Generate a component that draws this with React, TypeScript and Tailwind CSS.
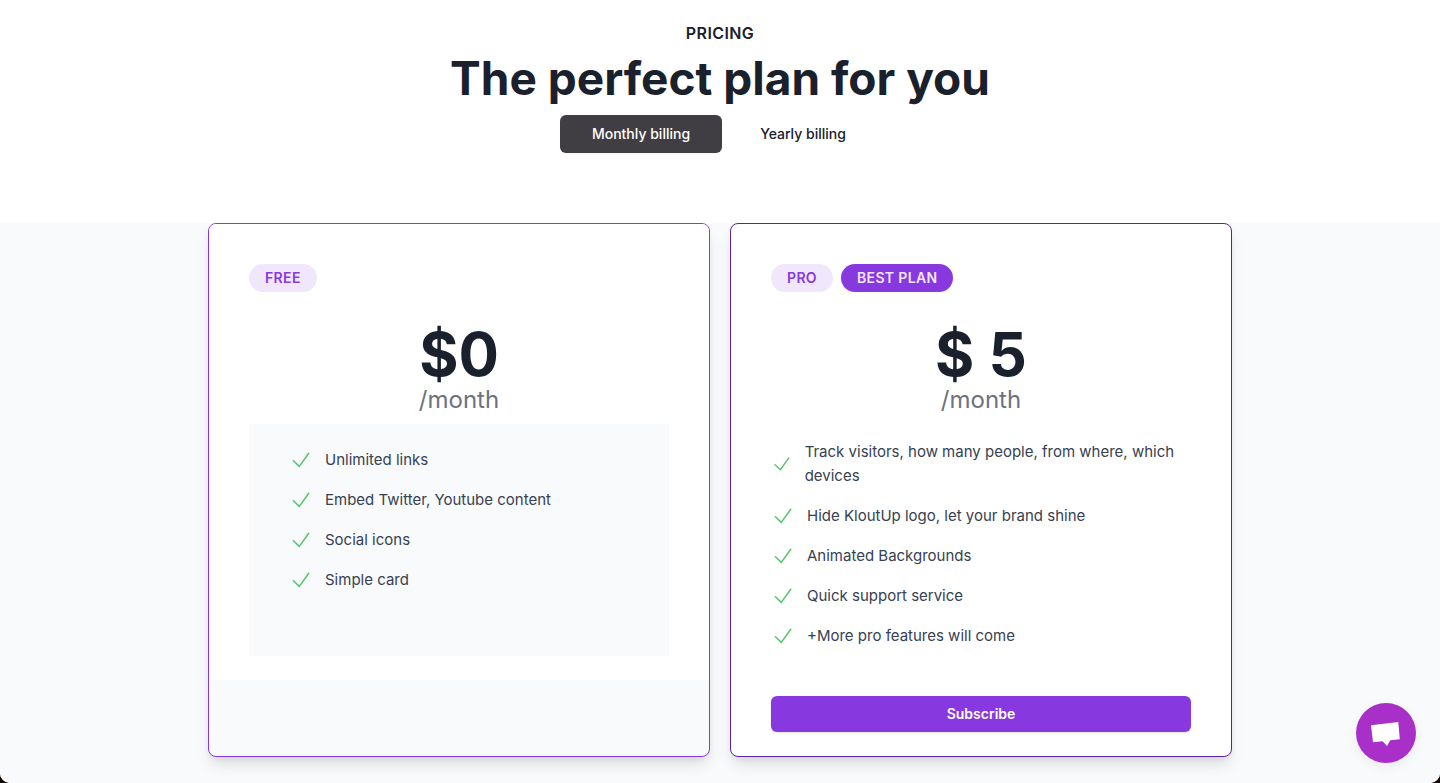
import { useState } from "react";

interface CheckItemProps {
  text: string;
}

const freeFeatures = [
  "Unlimited links",
  "Embed Twitter, Youtube content",
  "Social icons",
  "Simple card",
];

const proFeatures = [
  "Track visitors, how many people, from where, which devices",
  "Hide KloutUp logo, let your brand shine",
  "Animated Backgrounds",
  "Quick support service",
  "+More pro features will come",
];

function CheckItem({ text }: CheckItemProps) {
  return (
    <li className="flex items-center">
      <svg className="w-6 h-6 min-w-0 text-[#52c666]" viewBox="0 0 24 24" fill="none" stroke="currentColor" strokeWidth="1.5" strokeLinecap="round" strokeLinejoin="round">
        <path d="M4.4 12.8 L10.3 18.4 L19.8 5.3" />
      </svg>
      <span className="ml-3 text-[15px] leading-6 text-[#374151]">{text}</span>
    </li>
  );
}

function Price({ amount }: { amount: string }) {
  return (
    <div className="mt-8 flex flex-col items-center text-[#1a202c]">
      <span className="text-6xl leading-[60px] font-bold">{amount}</span>
      <span className="text-2xl font-normal text-[#6b7280]">/month</span>
    </div>
  );
}

function App() {
  const [billing, setBilling] = useState("month");

  const tabClass = (name: string) =>
    billing === name
      ? "rounded-md bg-[#403e43] text-white shadow-xs"
      : "rounded-md text-[#1a202c]";

  return (
    <div className="min-h-screen bg-[#140604] font-['Inter',sans-serif]">
      <div className="min-h-screen flex flex-col bg-white rounded-b-[10px] overflow-hidden">
        <header className="flex flex-col items-center pt-[21px] pb-[70px] text-[#1a202c]">
          <h2 className="text-base leading-6 font-semibold tracking-wide uppercase">Pricing</h2>
          <h1 className="mt-2 text-[46px] leading-[50px] font-bold text-center">The perfect plan for you</h1>
          <div className="mt-3 ml-1 flex">
            <button
              type="button"
              className={`w-[162px] h-[38px] text-sm font-medium ${tabClass("month")}`}
              onClick={() => setBilling("month")}
            >
              Monthly billing
            </button>
            <button
              type="button"
              className={`w-[162px] h-[38px] text-sm font-medium ${tabClass("year")}`}
              onClick={() => setBilling("year")}
            >
              Yearly billing
            </button>
          </div>
        </header>

        <main className="grow bg-[#f8fafc] px-4 pb-[26px]">
          <div className="mx-auto max-w-5xl grid md:grid-cols-2 gap-5">
            <section className="rounded-lg border border-[#8739df] shadow-[0_10px_15px_-3px_rgba(0,0,0,0.12),0_4px_6px_-2px_rgba(0,0,0,0.06)] overflow-hidden bg-[#f8fafc]">
              <div className="bg-white px-10 pt-10 pb-6">
                <div className="flex">
                  <h3 className="rounded-full bg-[#f0e7fc] px-4 py-1 text-sm font-semibold tracking-wide uppercase text-[#8739df]">Free</h3>
                </div>
                <Price amount="$0" />
                <ul className="mt-2 min-h-[232px] bg-[#f8fafc] px-10 py-6 space-y-4">
                  {freeFeatures.map((item) => (
                    <CheckItem key={item} text={item} />
                  ))}
                </ul>
              </div>
            </section>

            <section className="rounded-lg border border-[#5b21a6] shadow-[0_10px_15px_-3px_rgba(0,0,0,0.12),0_4px_6px_-2px_rgba(0,0,0,0.06)] overflow-hidden bg-white px-10 pt-10 pb-6">
              <div className="flex gap-2">
                <h3 className="rounded-full bg-[#f0e7fc] px-4 py-1 text-sm font-semibold tracking-wide uppercase text-[#8739df]">Pro</h3>
                <span className="rounded-full bg-[#8739df] px-4 py-1 text-sm font-semibold tracking-wide uppercase text-[#f0e7fc]">Best plan</span>
              </div>
              <Price amount="$ 5" />
              <ul className="mt-6 space-y-4">
                {proFeatures.map((item) => (
                  <CheckItem key={item} text={item} />
                ))}
              </ul>
              <button type="button" className="mt-12 w-full h-9 rounded-md bg-[#8739df] text-sm font-semibold text-white shadow-sm">
                Subscribe
              </button>
            </section>
          </div>
        </main>
      </div>

      <button
        type="button"
        aria-label="Open chat"
        className="fixed right-6 bottom-5 w-[60px] h-[60px] rounded-full bg-[#a92fc9] shadow-[0_4px_12px_rgba(0,0,0,0.06)]"
      >
        <svg className="w-full h-full" viewBox="0 0 60 60" fill="#ffffff">
          <path d="M15 22.2 L42.3 19 L43.8 36.3 L34.2 37.3 L31 43 L26.6 38.2 L17 39.2 Z" />
        </svg>
      </button>
    </div>
  );
}

export default App;
